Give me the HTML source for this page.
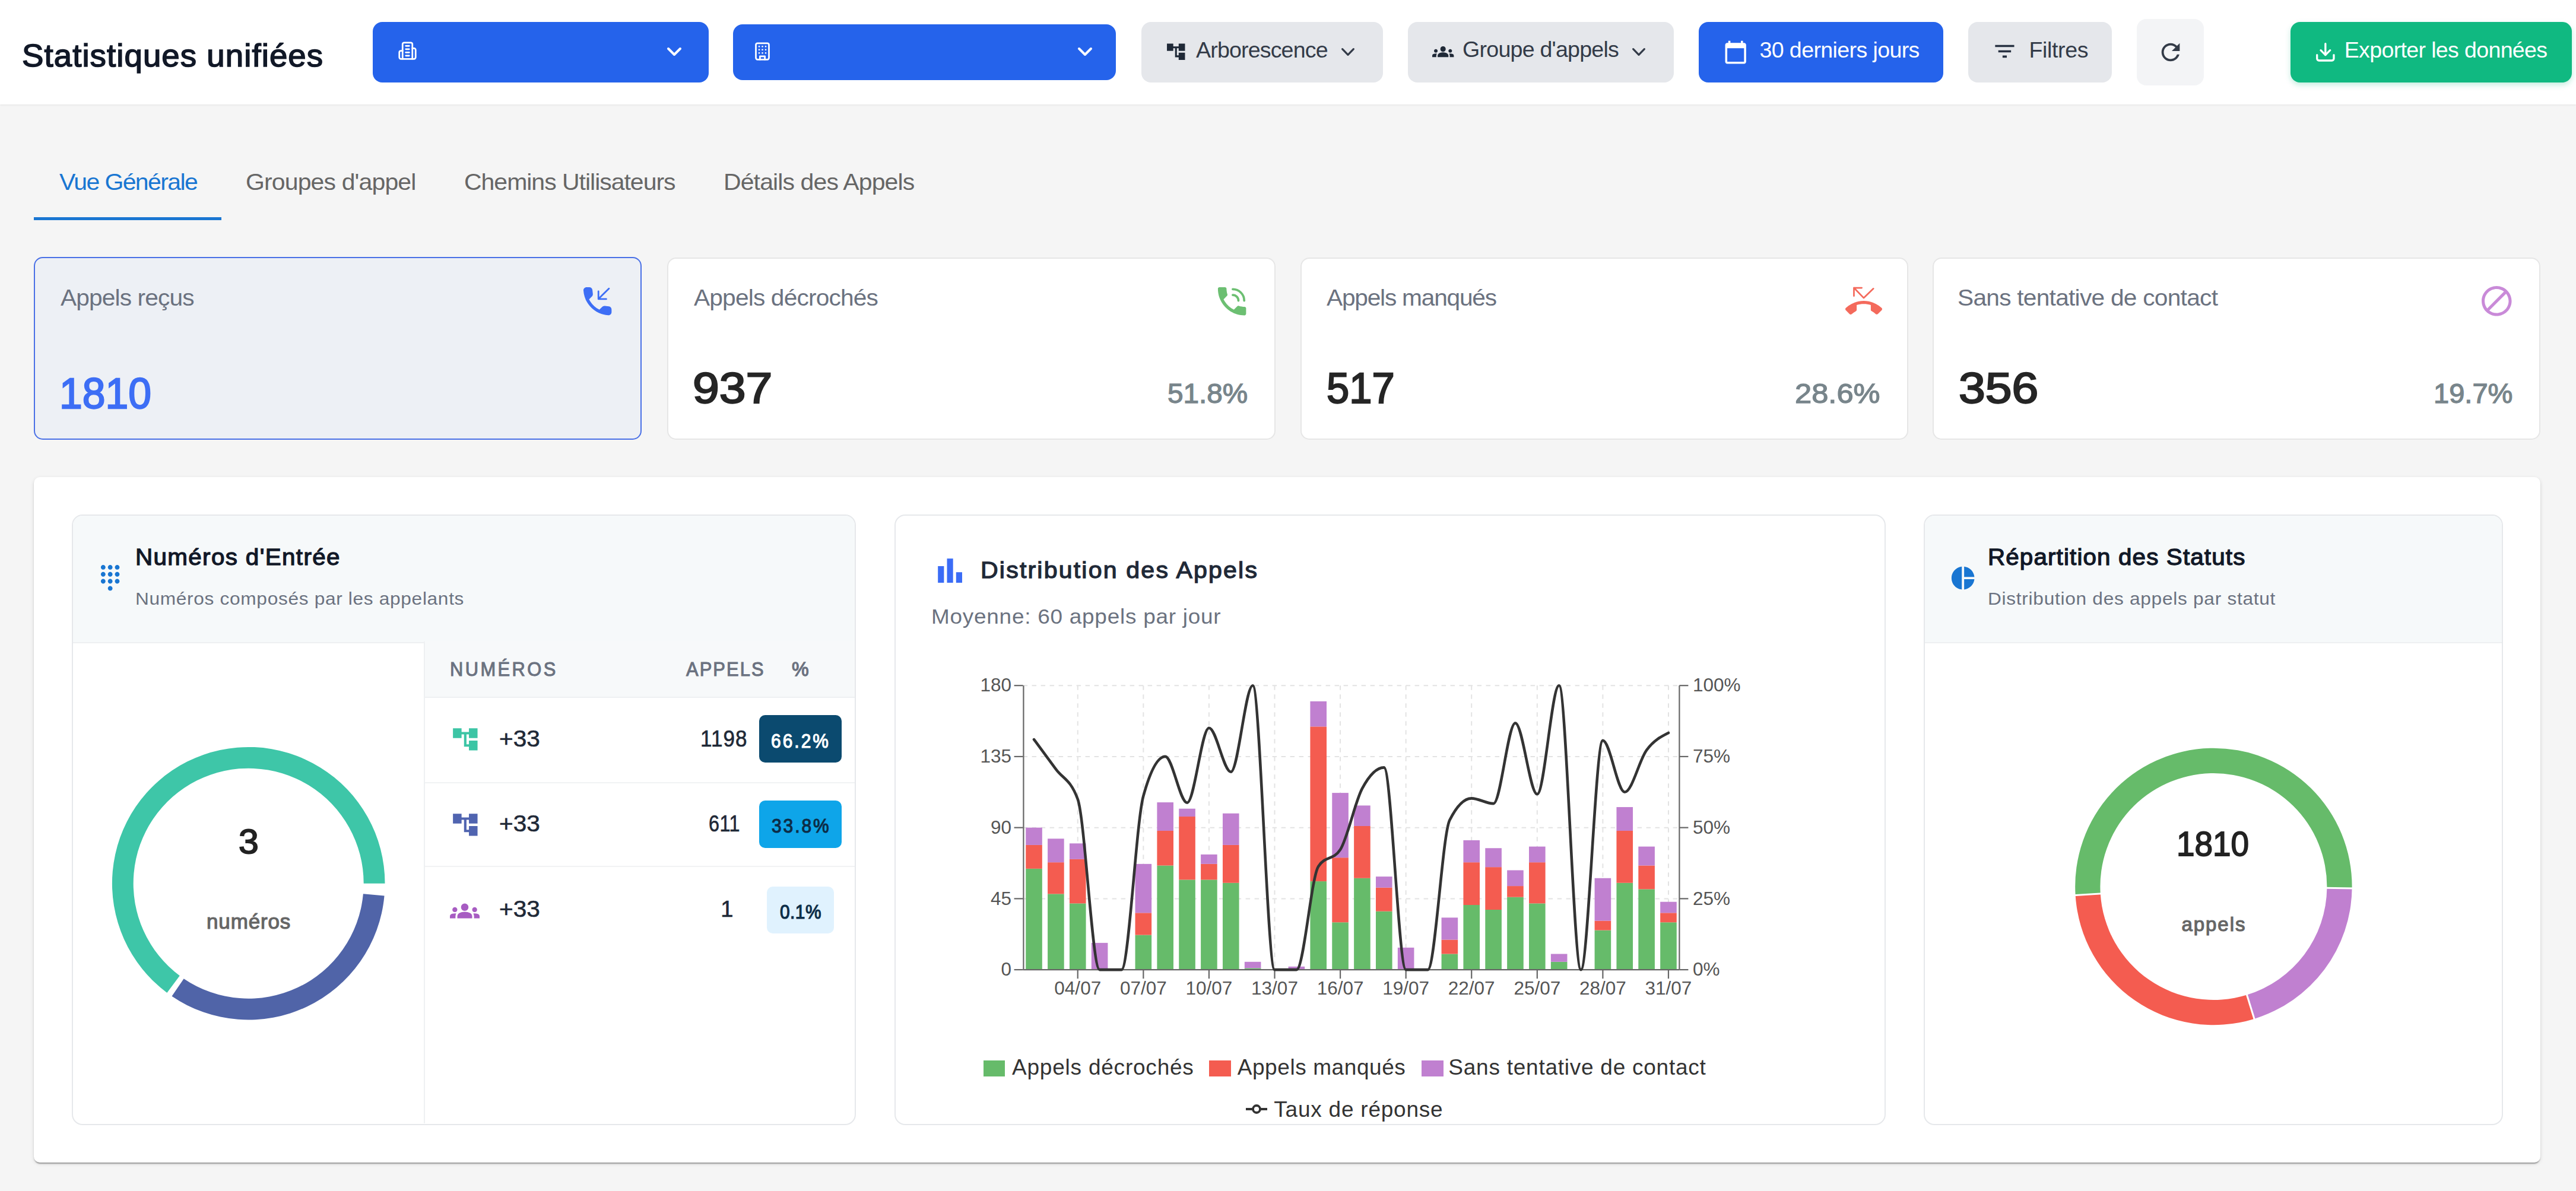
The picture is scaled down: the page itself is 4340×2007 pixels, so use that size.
<!DOCTYPE html>
<html><head><meta charset="utf-8"><title>Statistiques unifiées</title>
<style>
html,body{margin:0;padding:0;}
body{width:4340px;height:2007px;position:relative;overflow:hidden;background:#f5f5f5;font-family:'Liberation Sans',sans-serif;}
</style></head><body>
<div style="position:absolute;left:0px;top:0px;width:4340px;height:176px;background:#ffffff;border-radius:0px;box-shadow:0 1px 3px rgba(0,0,0,0.08);"></div><div style="position:absolute;top:66.95px;font-size:53px;line-height:53px;height:53px;color:#111827;font-weight:400;white-space:nowrap;letter-spacing:1.046px;left:36.97px;transform:scaleX(1.0300);transform-origin:0 0;-webkit-text-stroke:1.6px #111827;">Statistiques unifiées</div><div style="position:absolute;left:628px;top:37px;width:566px;height:102px;background:#2563eb;border-radius:16px;"></div><svg style="position:absolute;left:670px;top:68.8px;" width="33" height="33" viewBox="0 0 24 24"><g fill="none" stroke="#fff" stroke-width="2" stroke-linecap="round" stroke-linejoin="round"><path d="M6 22V4a2 2 0 0 1 2-2h8a2 2 0 0 1 2 2v18Z"/><path d="M6 12H4a2 2 0 0 0-2 2v6a2 2 0 0 0 2 2h2"/><path d="M18 9h2a2 2 0 0 1 2 2v9a2 2 0 0 1-2 2h-2"/><path d="M10 6h4"/><path d="M10 10h4"/><path d="M10 14h4"/><path d="M10 18h4"/></g></svg><svg style="position:absolute;left:1124px;top:80px;overflow:visible;" width="24" height="14" viewBox="0 0 24 14"><polyline points="2.0,2.0 12.0,12.0 22.0,2.0" fill="none" stroke="#fff" stroke-width="4" stroke-linecap="round" stroke-linejoin="round"/></svg><div style="position:absolute;left:1235px;top:41px;width:645px;height:94px;background:#2563eb;border-radius:16px;"></div><svg style="position:absolute;left:1268px;top:70px;" width="33" height="33" viewBox="0 0 24 24"><g fill="none" stroke="#fff" stroke-width="2" stroke-linecap="round" stroke-linejoin="round"><rect x="4" y="2" width="16" height="20" rx="2"/><path d="M9 22v-4h6v4"/><path d="M8 6h.01M16 6h.01M12 6h.01M12 10h.01M12 14h.01M16 10h.01M16 14h.01M8 10h.01M8 14h.01"/></g></svg><svg style="position:absolute;left:1816px;top:80px;overflow:visible;" width="24" height="14" viewBox="0 0 24 14"><polyline points="2.0,2.0 12.0,12.0 22.0,2.0" fill="none" stroke="#fff" stroke-width="4" stroke-linecap="round" stroke-linejoin="round"/></svg><div style="position:absolute;left:1923px;top:37px;width:407px;height:102px;background:#e5e7eb;border-radius:16px;"></div><svg style="position:absolute;left:1963px;top:68.8px;overflow:visible;" width="36.5" height="36.5" viewBox="0 0 24 24"><path d="M22 11V3h-7v3H9V3H2v8h7V8h2v10h4v3h7v-8h-7v3h-2V8h2v3z" fill="#1f2937"/></svg><div style="position:absolute;top:65.84px;font-size:37.6px;line-height:37.6px;height:37.6px;color:#333b48;font-weight:400;white-space:nowrap;left:2015.00px;letter-spacing:-0.845px;">Arborescence</div><svg style="position:absolute;left:2260px;top:81px;overflow:visible;" width="22" height="13" viewBox="0 0 22 13"><polyline points="1.6,1.6 11.0,11.4 20.4,1.6" fill="none" stroke="#333b48" stroke-width="3.2" stroke-linecap="round" stroke-linejoin="round"/></svg><div style="position:absolute;left:2372px;top:37px;width:448px;height:102px;background:#e5e7eb;border-radius:16px;"></div><svg style="position:absolute;left:2412.8px;top:69.2px;overflow:visible;" width="36.4" height="36.4" viewBox="0 0 24 24"><path d="M12 12.75c1.63 0 3.07.39 4.24.9 1.08.48 1.76 1.56 1.76 2.73V18H6v-1.61c0-1.18.68-2.26 1.76-2.73 1.17-.52 2.61-.91 4.24-.91zM4 13c1.1 0 2-.9 2-2s-.9-2-2-2-2 .9-2 2 .9 2 2 2zm1.13 1.1c-.37-.06-.74-.1-1.13-.1-.99 0-1.930.21-2.78.58C.48 14.9 0 15.62 0 16.43V18h4.5v-1.61c0-.83.23-1.61.63-2.29zM20 13c1.1 0 2-.9 2-2s-.9-2-2-2-2 .9-2 2 .9 2 2 2zm4 3.43c0-.81-.48-1.53-1.220-1.85-.85-.37-1.79-.58-2.78-.58-.39 0-.76.04-1.13.1.4.68.63 1.46.63 2.29V18H24v-1.57zM12 6c1.66 0 3 1.34 3 3s-1.34 3-3 3-3-1.34-3-3 1.34-3 3-3z" fill="#1f2937"/></svg><div style="position:absolute;top:65.44px;font-size:37.6px;line-height:37.6px;height:37.6px;color:#333b48;font-weight:400;white-space:nowrap;left:2464.12px;letter-spacing:-0.777px;">Groupe d'appels</div><svg style="position:absolute;left:2750px;top:80.5px;overflow:visible;" width="22" height="13" viewBox="0 0 22 13"><polyline points="1.6,1.6 11.0,11.4 20.4,1.6" fill="none" stroke="#333b48" stroke-width="3.2" stroke-linecap="round" stroke-linejoin="round"/></svg><div style="position:absolute;left:2862px;top:37px;width:412px;height:102px;background:#2563eb;border-radius:16px;"></div><svg style="position:absolute;left:2902.5px;top:66.5px;overflow:visible;" width="42.4" height="42.4" viewBox="0 0 24 24"><path d="M20 3h-1V1h-2v2H7V1H5v2H4c-1.1 0-2 .9-2 2v16c0 1.1.9 2 2 2h16c1.1 0 2-.9 2-2V5c0-1.1-.9-2-2-2zm0 18H4V8h16v13z" fill="#ffffff"/></svg><div style="position:absolute;top:66.24px;font-size:37.6px;line-height:37.6px;height:37.6px;color:#ffffff;font-weight:400;white-space:nowrap;left:2964.50px;letter-spacing:-0.625px;">30 derniers jours</div><div style="position:absolute;left:3316px;top:37px;width:242px;height:102px;background:#e5e7eb;border-radius:16px;"></div><svg style="position:absolute;left:3356.1px;top:65.3px;overflow:visible;" width="42.9" height="42.9" viewBox="0 0 24 24"><path d="M10 18h4v-2h-4v2zM3 6v2h18V6H3zm3 7h12v-2H6v2z" fill="#263040"/></svg><div style="position:absolute;top:66.14px;font-size:37.6px;line-height:37.6px;height:37.6px;color:#333b48;font-weight:400;white-space:nowrap;left:3418.59px;letter-spacing:-0.408px;">Filtres</div><div style="position:absolute;left:3600px;top:32px;width:113px;height:112px;background:#f3f4f6;border-radius:16px;"></div><svg style="position:absolute;left:3633.5px;top:65.2px;overflow:visible;" width="46" height="46" viewBox="0 0 24 24"><path d="M17.65 6.35C16.2 4.9 14.21 4 12 4c-4.42 0-7.99 3.58-7.99 8s3.57 8 7.99 8c3.73 0 6.84-2.55 7.730-6h-2.08c-.82 2.33-3.04 4-5.65 4-3.31 0-6-2.69-6-6s2.69-6 6-6c1.66 0 3.14.69 4.22 1.78L13 11h7V4l-2.35 2.35z" fill="#333b48"/></svg><div style="position:absolute;left:3859px;top:37px;width:474px;height:102px;background:#10b981;border-radius:16px;box-shadow:0 4px 10px rgba(16,185,129,0.25);"></div><svg style="position:absolute;left:3899px;top:68.6px;" width="37.7" height="37.7" viewBox="0 0 24 24"><g fill="none" stroke="#fff" stroke-width="2.1" stroke-linecap="round" stroke-linejoin="round"><path d="M21 15v4a2 2 0 0 1-2 2H5a2 2 0 0 1-2-2v-4"/><polyline points="7 10 12 15 17 10"/><line x1="12" y1="15" x2="12" y2="3"/></g></svg><div style="position:absolute;top:66.14px;font-size:37.6px;line-height:37.6px;height:37.6px;color:#ffffff;font-weight:400;white-space:nowrap;left:3949.69px;letter-spacing:-0.668px;">Exporter les données</div><div style="position:absolute;top:287.75px;font-size:38.3px;line-height:38.3px;height:38.3px;color:#1976d2;font-weight:400;white-space:nowrap;letter-spacing:-1.493px;left:100.20px;transform:scaleX(1.0700);transform-origin:0 0;">Vue Générale</div><div style="position:absolute;top:287.75px;font-size:38.3px;line-height:38.3px;height:38.3px;color:#666666;font-weight:400;white-space:nowrap;letter-spacing:-0.805px;left:413.55px;transform:scaleX(1.0700);transform-origin:0 0;">Groupes d'appel</div><div style="position:absolute;top:287.75px;font-size:38.3px;line-height:38.3px;height:38.3px;color:#666666;font-weight:400;white-space:nowrap;letter-spacing:-0.945px;left:782.15px;transform:scaleX(1.0700);transform-origin:0 0;">Chemins Utilisateurs</div><div style="position:absolute;top:287.75px;font-size:38.3px;line-height:38.3px;height:38.3px;color:#666666;font-weight:400;white-space:nowrap;letter-spacing:-0.822px;left:1219.42px;transform:scaleX(1.0700);transform-origin:0 0;">Détails des Appels</div><div style="position:absolute;left:57px;top:366px;width:316px;height:5px;background:#1976d2;border-radius:0px;"></div><div style="position:absolute;left:57px;top:433px;width:1024px;height:308px;background:#edf0f5;border-radius:15px;box-sizing:border-box;border:2px solid #4a70e6;"></div><div style="position:absolute;top:483.00px;font-size:38px;line-height:38px;height:38px;color:#6b7280;font-weight:400;white-space:nowrap;letter-spacing:-0.806px;left:101.70px;transform:scaleX(1.0700);transform-origin:0 0;">Appels reçus</div><div style="position:absolute;top:625.85px;font-size:73px;line-height:73px;height:73px;color:#3d6ef5;font-weight:400;white-space:nowrap;left:99.57px;transform:scaleX(0.9541);transform-origin:0 0;-webkit-text-stroke:2.3px #3d6ef5;">1810</div><div style="position:absolute;left:1123.5px;top:433.5px;width:1025.5px;height:307.5px;background:#ffffff;border-radius:15px;box-sizing:border-box;border:2px solid #e6e6e6;"></div><div style="position:absolute;top:483.00px;font-size:38px;line-height:38px;height:38px;color:#6b7280;font-weight:400;white-space:nowrap;letter-spacing:-0.768px;left:1168.50px;transform:scaleX(1.0700);transform-origin:0 0;">Appels décrochés</div><div style="position:absolute;top:618.00px;font-size:72px;line-height:72px;height:72px;color:#252525;font-weight:400;white-space:nowrap;left:1167.36px;transform:scaleX(1.1184);transform-origin:0 0;-webkit-text-stroke:2.3px #252525;">937</div><div style="position:absolute;top:640.18px;font-size:46.5px;line-height:46.5px;height:46.5px;color:#78858b;font-weight:400;white-space:nowrap;left:1967.26px;transform:scaleX(1.0251);transform-origin:0 0;-webkit-text-stroke:1.3px #78858b;">51.8%</div><div style="position:absolute;left:2191px;top:433.5px;width:1024px;height:307.5px;background:#ffffff;border-radius:15px;box-sizing:border-box;border:2px solid #e6e6e6;"></div><div style="position:absolute;top:483.00px;font-size:38px;line-height:38px;height:38px;color:#6b7280;font-weight:400;white-space:nowrap;letter-spacing:-1.135px;left:2234.60px;transform:scaleX(1.0700);transform-origin:0 0;">Appels manqués</div><div style="position:absolute;top:618.00px;font-size:72px;line-height:72px;height:72px;color:#252525;font-weight:400;white-space:nowrap;left:2234.55px;transform:scaleX(0.9542);transform-origin:0 0;-webkit-text-stroke:2.3px #252525;">517</div><div style="position:absolute;top:640.18px;font-size:46.5px;line-height:46.5px;height:46.5px;color:#78858b;font-weight:400;white-space:nowrap;left:3024.28px;transform:scaleX(1.0892);transform-origin:0 0;-webkit-text-stroke:1.3px #78858b;">28.6%</div><div style="position:absolute;left:3256px;top:433.5px;width:1024px;height:307.5px;background:#ffffff;border-radius:15px;box-sizing:border-box;border:2px solid #e6e6e6;"></div><div style="position:absolute;top:483.00px;font-size:38px;line-height:38px;height:38px;color:#6b7280;font-weight:400;white-space:nowrap;letter-spacing:-0.688px;left:3297.97px;transform:scaleX(1.0700);transform-origin:0 0;">Sans tentative de contact</div><div style="position:absolute;top:618.00px;font-size:72px;line-height:72px;height:72px;color:#252525;font-weight:400;white-space:nowrap;left:3300.07px;transform:scaleX(1.1184);transform-origin:0 0;-webkit-text-stroke:2.3px #252525;">356</div><div style="position:absolute;top:640.18px;font-size:46.5px;line-height:46.5px;height:46.5px;color:#78858b;font-weight:400;white-space:nowrap;left:4100.03px;transform:scaleX(1.0116);transform-origin:0 0;-webkit-text-stroke:1.3px #78858b;">19.7%</div><svg style="position:absolute;left:975px;top:476px;overflow:visible;" width="63.3" height="63.3" viewBox="0 0 24 24"><path d="M19.23 15.26l-2.54-.29c-.61-.07-1.21.14-1.64.57l-1.84 1.84c-2.83-1.44-5.15-3.75-6.59-6.59l1.85-1.85c.43-.43.64-1.03.57-1.64l-.29-2.52c-.12-1.010-.97-1.77-1.99-1.77H5.03c-1.13 0-2.07.94-2 2.07.53 8.54 7.36 15.36 15.89 15.89 1.13.07 2.07-.87 2.07-2v-1.73c.01-1.01-.75-1.86-1.76-1.98z" fill="#3d6ef5"/><path d="M19.3 3.9L12.9 10.2M12.6 5.6V10.6H17.6" fill="none" stroke="#3d6ef5" stroke-width="1.05" stroke-linecap="round" stroke-linejoin="round"/></svg><svg style="position:absolute;left:2043.6px;top:475.8px;overflow:visible;" width="63.3" height="63.3" viewBox="0 0 24 24"><path d="M20 15.5c-1.25 0-2.45-.2-3.57-.57-.1-.03-.21-.05-.31-.05-.26 0-.51.1-.71.29l-2.2 2.2c-2.83-1.44-5.15-3.75-6.59-6.59l2.2-2.21c.28-.26.36-.65.25-1C8.7 6.45 8.5 5.25 8.5 4c0-.55-.45-1-1-1H4c-.55 0-1 .45-1 1 0 9.39 7.61 17 17 17 .55 0 1-.45 1-1v-3.5c0-.55-.45-1-1-1z" fill="#6cbf72"/><path d="M12.5 4.3A7.3 7.3 0 0 1 19.8 11.6M12.5 8.0A3.6 3.6 0 0 1 16.1 11.6" fill="none" stroke="#6cbf72" stroke-width="1.45" stroke-linecap="round"/></svg><svg style="position:absolute;left:3109.3px;top:476.1px;overflow:visible;" width="62" height="62" viewBox="0 0 24 24"><path d="M23.71 16.67C20.66 13.78 16.54 12 12 12 7.46 12 3.34 13.78.29 16.670c-.18.18-.29.43-.29.71s.11.53.29.71l2.48 2.48c.18.18.43.29.71.29.27 0 .52-.11.7-.28.79-.74 1.69-1.36 2.66-1.850.33-.16.56-.5.56-.9v-3.1c1.45-.48 3-.73 4.6-.73s3.15.25 4.6.72v3.1c0 .39.23.74.56.9.98.49 1.87 1.12 2.67 1.85.18.18.43.28.7.28.28 0 .53-.11.71-.29l2.48-2.48c.18-.18.29-.43.29-.71s-.12-.52-.3-.7z" fill="#f46a5c"/><path d="M10.7 3.5H5.6V8.8M5.6 3.5L12 10.1L18.3 4" fill="none" stroke="#f46a5c" stroke-width="1.05" stroke-linecap="round" stroke-linejoin="round"/></svg><svg style="position:absolute;left:4175.9px;top:476.7px;overflow:visible;" width="60.6" height="60.6" viewBox="0 0 24 24"><path d="M12 2C6.48 2 2 6.48 2 12s4.48 10 10 10 10-4.48 10-10S17.52 2 12 2zM4 12c0-4.42 3.58-8 8-8 1.85 0 3.55.63 4.9 1.69L5.69 16.9C4.63 15.55 4 13.85 4 12zm8 8c-1.85 0-3.55-.63-4.9-1.69L18.31 7.1C19.37 8.45 20 10.15 20 12c0 4.42-3.58 8-8 8z" fill="#c98ad8"/></svg><div style="position:absolute;left:57px;top:804px;width:4223px;height:1155px;background:#ffffff;border-radius:10px;box-shadow:0 4px 2px -2px rgba(0,0,0,0.2),0 2px 2px 0 rgba(0,0,0,0.14),0 2px 6px 0 rgba(0,0,0,0.12);"></div><div style="position:absolute;left:121px;top:867px;width:1321px;height:1029px;box-sizing:border-box;border:2px solid #e6e8eb;border-radius:18px;overflow:hidden;background:#fff;"><div style="position:absolute;left:0;top:0;right:0;height:213px;background:#f6f9fa;border-bottom:2px solid #eef0f2;"></div></div><div style="position:absolute;left:1507px;top:867px;width:1670px;height:1029px;box-sizing:border-box;border:2px solid #e6e8eb;border-radius:18px;background:#fff;"></div><div style="position:absolute;left:3241px;top:867px;width:976px;height:1029px;box-sizing:border-box;border:2px solid #e6e8eb;border-radius:18px;overflow:hidden;background:#fff;"><div style="position:absolute;left:0;top:0;right:0;height:213px;background:#f6f9fa;border-bottom:2px solid #eef0f2;"></div></div><svg style="position:absolute;left:162.3px;top:950.2px;overflow:visible;" width="47.3" height="47.3" viewBox="0 0 24 24"><path d="M12 19c-1.1 0-2 .9-2 2s.9 2 2 2 2-.9 2-2-.9-2-2-2zM6 1c-1.1 0-2 .9-2 2s.9 2 2 2 2-.9 2-2-.9-2-2-2zm0 6c-1.1 0-2 .9-2 2s.9 2 2 2 2-.9 2-2-.9-2-2-2zm0 6c-1.1 0-2 .9-2 2s.9 2 2 2 2-.9 2-2-.9-2-2-2zm12-8c1.1 0 2-.9 2-2s-.9-2-2-2-2 .9-2 2 .9 2 2 2zm-6 8c-1.1 0-2 .9-2 2s.9 2 2 2 2-.9 2-2-.9-2-2-2zm6 0c-1.1 0-2 .9-2 2s.9 2 2 2 2-.9 2-2-.9-2-2-2zm0-6c-1.1 0-2 .9-2 2s.9 2 2 2 2-.9 2-2-.9-2-2-2zm-6 0c-1.1 0-2 .9-2 2s.9 2 2 2 2-.9 2-2-.9-2-2-2zm0-6c-1.1 0-2 .9-2 2s.9 2 2 2 2-.9 2-2-.9-2-2-2z" fill="#1976d2"/></svg><div style="position:absolute;top:919.62px;font-size:38.8px;line-height:38.8px;height:38.8px;color:#111827;font-weight:400;white-space:nowrap;letter-spacing:1.318px;left:227.65px;transform:scaleX(1.0400);transform-origin:0 0;-webkit-text-stroke:1.3px #111827;">Numéros d'Entrée</div><div style="position:absolute;top:993.70px;font-size:29.3px;line-height:29.3px;height:29.3px;color:#6b7280;font-weight:400;white-space:nowrap;letter-spacing:0.626px;left:227.67px;transform:scaleX(1.0800);transform-origin:0 0;">Numéros composés par les appelants</div><div style="position:absolute;left:716px;top:1081px;width:724px;height:94px;background:#f7f9fa;border-radius:0px;"></div><div style="position:absolute;left:714px;top:1081px;width:2px;height:812px;background:#eef0f2;border-radius:0px;"></div><div style="position:absolute;left:716px;top:1174px;width:724px;height:2px;background:#eef0f2;border-radius:0px;"></div><div style="position:absolute;left:716px;top:1318px;width:724px;height:2px;background:#f1f3f4;border-radius:0px;"></div><div style="position:absolute;left:716px;top:1459px;width:724px;height:2px;background:#f1f3f4;border-radius:0px;"></div><div style="position:absolute;top:1110.58px;font-size:33.2px;line-height:33.2px;height:33.2px;color:#6b7280;font-weight:400;white-space:nowrap;letter-spacing:3.685px;left:757.74px;transform:scaleX(0.9300);transform-origin:0 0;-webkit-text-stroke:1.1px #6b7280;">NUMÉROS</div><div style="position:absolute;top:1110.58px;font-size:33.2px;line-height:33.2px;height:33.2px;color:#6b7280;font-weight:400;white-space:nowrap;letter-spacing:2.249px;left:1155.51px;transform:scaleX(0.9300);transform-origin:0 0;-webkit-text-stroke:1.1px #6b7280;">APPELS</div><div style="position:absolute;top:1110.58px;font-size:33.2px;line-height:33.2px;height:33.2px;color:#6b7280;font-weight:400;white-space:nowrap;left:1334.10px;transform:scaleX(0.9711);transform-origin:0 0;-webkit-text-stroke:1.3px #6b7280;">%</div><svg style="position:absolute;left:758.5px;top:1221.0px;overflow:visible;" width="49.7" height="49.7" viewBox="0 0 24 24"><path d="M22 11V3h-7v3H9V3H2v8h7V8h2v10h4v3h7v-8h-7v3h-2V8h2v3z" fill="#3cc5a5"/></svg><div style="position:absolute;top:1225.50px;font-size:38px;line-height:38px;height:38px;color:#1f2937;font-weight:400;white-space:nowrap;left:840.90px;transform:scaleX(1.0651);transform-origin:0 0;-webkit-text-stroke:0.6px #1f2937;">+33</div><div style="position:absolute;top:1225.50px;font-size:38px;line-height:38px;height:38px;color:#1f2937;font-weight:400;white-space:nowrap;letter-spacing:1.200px;left:1180.10px;transform:scaleX(0.9200);transform-origin:0 0;-webkit-text-stroke:0.7px #1f2937;">1198</div><div style="position:absolute;left:1279px;top:1205px;width:139px;height:80px;background:#0b4a6f;border-radius:10px;"></div><div style="position:absolute;top:1232.77px;font-size:32.5px;line-height:32.5px;height:32.5px;color:#ffffff;font-weight:400;white-space:nowrap;letter-spacing:3.307px;left:1299.36px;transform:scaleX(0.9200);transform-origin:0 0;-webkit-text-stroke:1.2px #ffffff;">66.2%</div><svg style="position:absolute;left:758.5px;top:1364.7px;overflow:visible;" width="49.7" height="49.7" viewBox="0 0 24 24"><path d="M22 11V3h-7v3H9V3H2v8h7V8h2v10h4v3h7v-8h-7v3h-2V8h2v3z" fill="#5064b0"/></svg><div style="position:absolute;top:1369.20px;font-size:38px;line-height:38px;height:38px;color:#1f2937;font-weight:400;white-space:nowrap;left:840.90px;transform:scaleX(1.0651);transform-origin:0 0;-webkit-text-stroke:0.6px #1f2937;">+33</div><div style="position:absolute;top:1369.20px;font-size:38px;line-height:38px;height:38px;color:#1f2937;font-weight:400;white-space:nowrap;letter-spacing:0.562px;left:1193.68px;transform:scaleX(0.8500);transform-origin:0 0;-webkit-text-stroke:0.7px #1f2937;">611</div><div style="position:absolute;left:1279px;top:1349px;width:139px;height:80px;background:#0ea5e9;border-radius:10px;"></div><div style="position:absolute;top:1376.47px;font-size:32.5px;line-height:32.5px;height:32.5px;color:#0c2d48;font-weight:400;white-space:nowrap;letter-spacing:3.226px;left:1299.66px;transform:scaleX(0.9200);transform-origin:0 0;-webkit-text-stroke:1.2px #0c2d48;">33.8%</div><svg style="position:absolute;left:758.2px;top:1509.8px;overflow:visible;" width="50" height="50" viewBox="0 0 24 24"><path d="M12 12.75c1.63 0 3.07.39 4.24.9 1.08.48 1.76 1.56 1.76 2.73V18H6v-1.61c0-1.18.68-2.26 1.76-2.73 1.17-.52 2.61-.91 4.24-.91zM4 13c1.1 0 2-.9 2-2s-.9-2-2-2-2 .9-2 2 .9 2 2 2zm1.13 1.1c-.37-.06-.74-.1-1.13-.1-.99 0-1.930.21-2.78.58C.48 14.9 0 15.62 0 16.43V18h4.5v-1.61c0-.83.23-1.61.63-2.29zM20 13c1.1 0 2-.9 2-2s-.9-2-2-2-2 .9-2 2 .9 2 2 2zm4 3.43c0-.81-.48-1.53-1.220-1.85-.85-.37-1.79-.58-2.78-.58-.39 0-.76.04-1.13.1.4.68.63 1.46.63 2.29V18H24v-1.57zM12 6c1.66 0 3 1.34 3 3s-1.34 3-3 3-3-1.34-3-3 1.34-3 3-3z" fill="#a75cc2"/></svg><div style="position:absolute;top:1513.30px;font-size:38px;line-height:38px;height:38px;color:#1f2937;font-weight:400;white-space:nowrap;left:840.90px;transform:scaleX(1.0651);transform-origin:0 0;-webkit-text-stroke:0.6px #1f2937;">+33</div><div style="position:absolute;top:1513.30px;font-size:38px;line-height:38px;height:38px;color:#1f2937;font-weight:400;white-space:nowrap;left:1214.29px;-webkit-text-stroke:0.7px #1f2937;">1</div><div style="position:absolute;left:1292px;top:1494px;width:113px;height:79px;background:#e0f2fe;border-radius:10px;"></div><div style="position:absolute;top:1520.57px;font-size:32.5px;line-height:32.5px;height:32.5px;color:#0c2d48;font-weight:400;white-space:nowrap;letter-spacing:0.495px;left:1313.66px;transform:scaleX(0.9200);transform-origin:0 0;-webkit-text-stroke:1.2px #0c2d48;">0.1%</div><svg style="position:absolute;left:0px;top:0px;overflow:visible;" width="1442" height="1895" viewBox="0 0 1442 1895"><path d="M648.50,1488.70 A229.8,229.8 0 1 0 281.37,1672.95 L302.76,1644.24 A194,194 0 1 1 612.70,1488.70 Z" fill="#3ec6a8"/><path d="M289.53,1678.76 A229.8,229.8 0 0 0 647.55,1509.53 L611.90,1506.28 A194,194 0 0 1 309.66,1649.15 Z" fill="#5064a8"/></svg><div style="position:absolute;top:1390.15px;font-size:57px;line-height:57px;height:57px;color:#222222;font-weight:400;white-space:nowrap;left:401.73px;transform:scaleX(1.0667);transform-origin:0 0;-webkit-text-stroke:1.8px #222222;">3</div><div style="position:absolute;top:1535.35px;font-size:35px;line-height:35px;height:35px;color:#666666;font-weight:400;white-space:nowrap;left:348.03px;letter-spacing:0.858px;-webkit-text-stroke:1.2px #666666;">numéros</div><svg style="position:absolute;left:3284.1px;top:950.8px;overflow:visible;" width="46.3" height="46.3" viewBox="0 0 24 24"><path d="M11 2v20c-5.07-.5-9-4.79-9-10s3.93-9.5 9-10zm2.03 0v8.99H22c-.47-4.74-4.24-8.52-8.97-8.99zm0 11.01V22c4.74-.47 8.5-4.25 8.97-8.99h-8.970z" fill="#1976d2"/></svg><div style="position:absolute;top:919.62px;font-size:38.8px;line-height:38.8px;height:38.8px;color:#111827;font-weight:400;white-space:nowrap;letter-spacing:1.098px;left:3349.05px;transform:scaleX(1.0400);transform-origin:0 0;-webkit-text-stroke:1.3px #111827;">Répartition des Statuts</div><div style="position:absolute;top:994.10px;font-size:29.3px;line-height:29.3px;height:29.3px;color:#6b7280;font-weight:400;white-space:nowrap;letter-spacing:0.661px;left:3349.07px;transform:scaleX(1.0800);transform-origin:0 0;">Distribution des appels par statut</div><svg style="position:absolute;left:0px;top:0px;overflow:visible;" width="4340" height="2007" viewBox="0 0 4340 2007"><path d="M3962.58,1496.85 A233.2,233.2 0 1 0 3496.66,1508.64 L3538.78,1505.99 A191,191 0 1 1 3920.39,1496.33 Z" fill="#66bb6a"/><path d="M3797.97,1716.89 A233.2,233.2 0 0 0 3962.58,1496.85 L3920.39,1496.33 A191,191 0 0 1 3785.56,1676.56 Z" fill="#c080d0"/><path d="M3496.66,1508.64 A233.2,233.2 0 0 0 3797.97,1716.89 L3785.56,1676.56 A191,191 0 0 1 3538.78,1505.99 Z" fill="#f45c50"/><line x1="3541.77" y1="1505.80" x2="3493.67" y2="1508.83" stroke="#fff" stroke-width="3"/><line x1="3917.39" y1="1496.30" x2="3965.58" y2="1496.89" stroke="#fff" stroke-width="3"/><line x1="3784.68" y1="1673.69" x2="3798.85" y2="1719.76" stroke="#fff" stroke-width="3"/></svg><div style="position:absolute;top:1394.15px;font-size:57px;line-height:57px;height:57px;color:#222222;font-weight:400;white-space:nowrap;left:3667.05px;transform:scaleX(0.9628);transform-origin:0 0;-webkit-text-stroke:1.8px #222222;">1810</div><div style="position:absolute;top:1540.95px;font-size:33px;line-height:33px;height:33px;color:#666666;font-weight:400;white-space:nowrap;left:3675.38px;letter-spacing:1.978px;-webkit-text-stroke:1.2px #666666;">appels</div><svg style="position:absolute;left:1569.6px;top:930.5px;overflow:visible;" width="61.2" height="61.2" viewBox="0 0 24 24"><path d="M4 9h4v11H4zm12 4h4v7h-4zm-6-9h4v16h-4z" fill="#3b6cf6"/></svg><div style="position:absolute;top:941.32px;font-size:39.5px;line-height:39.5px;height:39.5px;color:#1f2937;font-weight:400;white-space:nowrap;letter-spacing:2.102px;left:1651.99px;transform:scaleX(1.0400);transform-origin:0 0;-webkit-text-stroke:1.3px #1f2937;">Distribution des Appels</div><div style="position:absolute;top:1021.53px;font-size:34.2px;line-height:34.2px;height:34.2px;color:#6b7280;font-weight:400;white-space:nowrap;letter-spacing:0.699px;left:1569.45px;transform:scaleX(1.0800);transform-origin:0 0;">Moyenne: 60 appels par jour</div><svg style="position:absolute;left:0px;top:0px;" width="4340" height="2007" viewBox="0 0 4340 2007"><line x1="1723.6" y1="1514.38" x2="2829.4" y2="1514.38" stroke="#e3e3e3" stroke-width="2" stroke-dasharray="7.5 7.5"/><line x1="1723.6" y1="1394.65" x2="2829.4" y2="1394.65" stroke="#e3e3e3" stroke-width="2" stroke-dasharray="7.5 7.5"/><line x1="1723.6" y1="1274.92" x2="2829.4" y2="1274.92" stroke="#e3e3e3" stroke-width="2" stroke-dasharray="7.5 7.5"/><line x1="1723.6" y1="1155.20" x2="2829.4" y2="1155.20" stroke="#e3e3e3" stroke-width="2" stroke-dasharray="7.5 7.5"/><line x1="1815.75" y1="1155.2" x2="1815.75" y2="1634.1" stroke="#e3e3e3" stroke-width="2" stroke-dasharray="7.5 7.5"/><line x1="1926.33" y1="1155.2" x2="1926.33" y2="1634.1" stroke="#e3e3e3" stroke-width="2" stroke-dasharray="7.5 7.5"/><line x1="2036.91" y1="1155.2" x2="2036.91" y2="1634.1" stroke="#e3e3e3" stroke-width="2" stroke-dasharray="7.5 7.5"/><line x1="2147.49" y1="1155.2" x2="2147.49" y2="1634.1" stroke="#e3e3e3" stroke-width="2" stroke-dasharray="7.5 7.5"/><line x1="2258.07" y1="1155.2" x2="2258.07" y2="1634.1" stroke="#e3e3e3" stroke-width="2" stroke-dasharray="7.5 7.5"/><line x1="2368.65" y1="1155.2" x2="2368.65" y2="1634.1" stroke="#e3e3e3" stroke-width="2" stroke-dasharray="7.5 7.5"/><line x1="2479.23" y1="1155.2" x2="2479.23" y2="1634.1" stroke="#e3e3e3" stroke-width="2" stroke-dasharray="7.5 7.5"/><line x1="2589.81" y1="1155.2" x2="2589.81" y2="1634.1" stroke="#e3e3e3" stroke-width="2" stroke-dasharray="7.5 7.5"/><line x1="2700.39" y1="1155.2" x2="2700.39" y2="1634.1" stroke="#e3e3e3" stroke-width="2" stroke-dasharray="7.5 7.5"/><line x1="2810.97" y1="1155.2" x2="2810.97" y2="1634.1" stroke="#e3e3e3" stroke-width="2" stroke-dasharray="7.5 7.5"/><line x1="1724.3999999999999" y1="1155.2" x2="1724.3999999999999" y2="1634.1" stroke="#666" stroke-width="2.2"/><line x1="2829.4" y1="1155.2" x2="2829.4" y2="1634.1" stroke="#666" stroke-width="2.2"/><line x1="1723.6" y1="1634.1" x2="2829.4" y2="1634.1" stroke="#666" stroke-width="2.2"/><line x1="1708.6" y1="1634.10" x2="1723.6" y2="1634.10" stroke="#666" stroke-width="2.2"/><line x1="2829.4" y1="1634.10" x2="2844.4" y2="1634.10" stroke="#666" stroke-width="2.2"/><line x1="1708.6" y1="1514.38" x2="1723.6" y2="1514.38" stroke="#666" stroke-width="2.2"/><line x1="2829.4" y1="1514.38" x2="2844.4" y2="1514.38" stroke="#666" stroke-width="2.2"/><line x1="1708.6" y1="1394.65" x2="1723.6" y2="1394.65" stroke="#666" stroke-width="2.2"/><line x1="2829.4" y1="1394.65" x2="2844.4" y2="1394.65" stroke="#666" stroke-width="2.2"/><line x1="1708.6" y1="1274.92" x2="1723.6" y2="1274.92" stroke="#666" stroke-width="2.2"/><line x1="2829.4" y1="1274.92" x2="2844.4" y2="1274.92" stroke="#666" stroke-width="2.2"/><line x1="1708.6" y1="1155.20" x2="1723.6" y2="1155.20" stroke="#666" stroke-width="2.2"/><line x1="2829.4" y1="1155.20" x2="2844.4" y2="1155.20" stroke="#666" stroke-width="2.2"/><line x1="1815.75" y1="1634.1" x2="1815.75" y2="1649.1" stroke="#666" stroke-width="2.2"/><line x1="1926.33" y1="1634.1" x2="1926.33" y2="1649.1" stroke="#666" stroke-width="2.2"/><line x1="2036.91" y1="1634.1" x2="2036.91" y2="1649.1" stroke="#666" stroke-width="2.2"/><line x1="2147.49" y1="1634.1" x2="2147.49" y2="1649.1" stroke="#666" stroke-width="2.2"/><line x1="2258.07" y1="1634.1" x2="2258.07" y2="1649.1" stroke="#666" stroke-width="2.2"/><line x1="2368.65" y1="1634.1" x2="2368.65" y2="1649.1" stroke="#666" stroke-width="2.2"/><line x1="2479.23" y1="1634.1" x2="2479.23" y2="1649.1" stroke="#666" stroke-width="2.2"/><line x1="2589.81" y1="1634.1" x2="2589.81" y2="1649.1" stroke="#666" stroke-width="2.2"/><line x1="2700.39" y1="1634.1" x2="2700.39" y2="1649.1" stroke="#666" stroke-width="2.2"/><line x1="2810.97" y1="1634.1" x2="2810.97" y2="1649.1" stroke="#666" stroke-width="2.2"/><rect x="1728.23" y="1463.82" width="27.6" height="169.18" fill="#66bb6a"/><rect x="1728.23" y="1423.92" width="27.6" height="39.91" fill="#f45c50"/><rect x="1728.23" y="1394.65" width="27.6" height="29.27" fill="#c080d0"/><rect x="1765.09" y="1506.39" width="27.6" height="126.61" fill="#66bb6a"/><rect x="1765.09" y="1453.18" width="27.6" height="53.21" fill="#f45c50"/><rect x="1765.09" y="1413.27" width="27.6" height="39.91" fill="#c080d0"/><rect x="1801.95" y="1522.36" width="27.6" height="110.64" fill="#66bb6a"/><rect x="1801.95" y="1447.86" width="27.6" height="74.50" fill="#f45c50"/><rect x="1801.95" y="1421.26" width="27.6" height="26.61" fill="#c080d0"/><rect x="1838.81" y="1588.87" width="27.6" height="44.13" fill="#c080d0"/><rect x="1912.53" y="1575.57" width="27.6" height="57.43" fill="#66bb6a"/><rect x="1912.53" y="1538.32" width="27.6" height="37.25" fill="#f45c50"/><rect x="1912.53" y="1455.84" width="27.6" height="82.48" fill="#c080d0"/><rect x="1949.39" y="1458.50" width="27.6" height="174.50" fill="#66bb6a"/><rect x="1949.39" y="1399.97" width="27.6" height="58.53" fill="#f45c50"/><rect x="1949.39" y="1352.08" width="27.6" height="47.89" fill="#c080d0"/><rect x="1986.25" y="1482.45" width="27.6" height="150.55" fill="#66bb6a"/><rect x="1986.25" y="1376.03" width="27.6" height="106.42" fill="#f45c50"/><rect x="1986.25" y="1362.72" width="27.6" height="13.30" fill="#c080d0"/><rect x="2023.11" y="1482.45" width="27.6" height="150.55" fill="#66bb6a"/><rect x="2023.11" y="1455.84" width="27.6" height="26.61" fill="#f45c50"/><rect x="2023.11" y="1439.88" width="27.6" height="15.96" fill="#c080d0"/><rect x="2059.97" y="1487.77" width="27.6" height="145.23" fill="#66bb6a"/><rect x="2059.97" y="1423.92" width="27.6" height="63.85" fill="#f45c50"/><rect x="2059.97" y="1370.70" width="27.6" height="53.21" fill="#c080d0"/><rect x="2096.83" y="1631.44" width="27.6" height="1.56" fill="#66bb6a"/><rect x="2096.83" y="1620.80" width="27.6" height="10.64" fill="#c080d0"/><rect x="2170.55" y="1628.78" width="27.6" height="4.22" fill="#c080d0"/><rect x="2207.41" y="1485.11" width="27.6" height="147.89" fill="#66bb6a"/><rect x="2207.41" y="1224.37" width="27.6" height="260.73" fill="#f45c50"/><rect x="2207.41" y="1181.81" width="27.6" height="42.57" fill="#c080d0"/><rect x="2244.27" y="1554.28" width="27.6" height="78.72" fill="#66bb6a"/><rect x="2244.27" y="1445.20" width="27.6" height="109.08" fill="#f45c50"/><rect x="2244.27" y="1336.12" width="27.6" height="109.08" fill="#c080d0"/><rect x="2281.13" y="1479.79" width="27.6" height="153.21" fill="#66bb6a"/><rect x="2281.13" y="1391.99" width="27.6" height="87.80" fill="#f45c50"/><rect x="2281.13" y="1357.40" width="27.6" height="34.59" fill="#c080d0"/><rect x="2317.99" y="1535.66" width="27.6" height="97.34" fill="#66bb6a"/><rect x="2317.99" y="1495.75" width="27.6" height="39.91" fill="#f45c50"/><rect x="2317.99" y="1477.13" width="27.6" height="18.62" fill="#c080d0"/><rect x="2354.85" y="1596.85" width="27.6" height="36.15" fill="#c080d0"/><rect x="2428.57" y="1607.49" width="27.6" height="25.51" fill="#66bb6a"/><rect x="2428.57" y="1583.55" width="27.6" height="23.94" fill="#f45c50"/><rect x="2428.57" y="1546.30" width="27.6" height="37.25" fill="#c080d0"/><rect x="2465.43" y="1525.02" width="27.6" height="107.98" fill="#66bb6a"/><rect x="2465.43" y="1453.18" width="27.6" height="71.84" fill="#f45c50"/><rect x="2465.43" y="1415.93" width="27.6" height="37.25" fill="#c080d0"/><rect x="2502.29" y="1533.00" width="27.6" height="100.00" fill="#66bb6a"/><rect x="2502.29" y="1461.16" width="27.6" height="71.84" fill="#f45c50"/><rect x="2502.29" y="1429.24" width="27.6" height="31.93" fill="#c080d0"/><rect x="2539.15" y="1511.71" width="27.6" height="121.29" fill="#66bb6a"/><rect x="2539.15" y="1493.09" width="27.6" height="18.62" fill="#f45c50"/><rect x="2539.15" y="1466.48" width="27.6" height="26.61" fill="#c080d0"/><rect x="2576.01" y="1522.36" width="27.6" height="110.64" fill="#66bb6a"/><rect x="2576.01" y="1453.18" width="27.6" height="69.17" fill="#f45c50"/><rect x="2576.01" y="1426.58" width="27.6" height="26.61" fill="#c080d0"/><rect x="2612.87" y="1620.80" width="27.6" height="12.20" fill="#66bb6a"/><rect x="2612.87" y="1607.49" width="27.6" height="13.30" fill="#c080d0"/><rect x="2686.59" y="1567.59" width="27.6" height="65.41" fill="#66bb6a"/><rect x="2686.59" y="1551.62" width="27.6" height="15.96" fill="#f45c50"/><rect x="2686.59" y="1479.79" width="27.6" height="71.83" fill="#c080d0"/><rect x="2723.45" y="1487.77" width="27.6" height="145.23" fill="#66bb6a"/><rect x="2723.45" y="1399.97" width="27.6" height="87.80" fill="#f45c50"/><rect x="2723.45" y="1360.06" width="27.6" height="39.91" fill="#c080d0"/><rect x="2760.31" y="1498.41" width="27.6" height="134.59" fill="#66bb6a"/><rect x="2760.31" y="1458.50" width="27.6" height="39.91" fill="#f45c50"/><rect x="2760.31" y="1426.58" width="27.6" height="31.93" fill="#c080d0"/><rect x="2797.17" y="1554.28" width="27.6" height="78.72" fill="#66bb6a"/><rect x="2797.17" y="1538.32" width="27.6" height="15.96" fill="#f45c50"/><rect x="2797.17" y="1519.70" width="27.6" height="18.62" fill="#c080d0"/><path d="M1742.03,1246.13 C1754.32,1262.71 1766.60,1279.28 1778.89,1296.05 C1791.18,1312.82 1803.46,1312.96 1815.75,1346.76 C1828.04,1380.56 1840.32,1634.10 1852.61,1634.10 C1864.90,1634.10 1877.18,1634.10 1889.47,1634.10 C1901.76,1634.10 1914.04,1385.78 1926.33,1341.44 C1938.62,1297.10 1950.90,1274.92 1963.19,1274.92 C1975.48,1274.92 1987.76,1352.68 2000.05,1352.68 C2012.34,1352.68 2024.62,1226.68 2036.91,1226.68 C2049.20,1226.68 2061.48,1300.69 2073.77,1300.69 C2086.06,1300.69 2098.34,1155.20 2110.63,1155.20 C2122.92,1155.20 2135.20,1634.10 2147.49,1634.10 C2159.78,1634.10 2172.06,1634.10 2184.35,1634.10 C2196.64,1634.10 2208.92,1478.76 2221.21,1459.95 C2233.50,1441.15 2245.78,1450.55 2258.07,1431.75 C2270.36,1412.94 2282.64,1351.93 2294.93,1328.87 C2307.22,1305.80 2319.50,1293.34 2331.79,1293.34 C2344.08,1293.34 2356.36,1634.10 2368.65,1634.10 C2380.94,1634.10 2393.22,1634.10 2405.51,1634.10 C2417.80,1634.10 2430.08,1406.51 2442.37,1382.05 C2454.66,1357.58 2466.94,1345.35 2479.23,1345.35 C2491.52,1345.35 2503.80,1354.13 2516.09,1354.13 C2528.38,1354.13 2540.66,1218.45 2552.95,1218.45 C2565.24,1218.45 2577.52,1338.31 2589.81,1338.31 C2602.10,1338.31 2614.38,1155.20 2626.67,1155.20 C2638.96,1155.20 2651.24,1634.10 2663.53,1634.10 C2675.82,1634.10 2688.10,1247.89 2700.39,1247.89 C2712.68,1247.89 2724.96,1334.79 2737.25,1334.79 C2749.54,1334.79 2761.82,1280.67 2774.11,1264.04 C2786.40,1247.41 2798.68,1241.21 2810.97,1235.02" fill="none" stroke="#333333" stroke-width="4.6" stroke-linejoin="round" stroke-linecap="round"/></svg><div style="position:absolute;top:1618.3px;font-size:31.5px;line-height:31.5px;height:31.5px;color:#555555;font-weight:400;white-space:nowrap;font-family:'Liberation Sans',sans-serif;right:2636px;">0</div><div style="position:absolute;top:1498.6px;font-size:31.5px;line-height:31.5px;height:31.5px;color:#555555;font-weight:400;white-space:nowrap;font-family:'Liberation Sans',sans-serif;right:2636px;">45</div><div style="position:absolute;top:1378.9px;font-size:31.5px;line-height:31.5px;height:31.5px;color:#555555;font-weight:400;white-space:nowrap;font-family:'Liberation Sans',sans-serif;right:2636px;">90</div><div style="position:absolute;top:1259.1px;font-size:31.5px;line-height:31.5px;height:31.5px;color:#555555;font-weight:400;white-space:nowrap;font-family:'Liberation Sans',sans-serif;right:2636px;">135</div><div style="position:absolute;top:1139.4px;font-size:31.5px;line-height:31.5px;height:31.5px;color:#555555;font-weight:400;white-space:nowrap;font-family:'Liberation Sans',sans-serif;right:2636px;">180</div><div style="position:absolute;top:1618.3px;font-size:31.5px;line-height:31.5px;height:31.5px;color:#555555;font-weight:400;white-space:nowrap;font-family:'Liberation Sans',sans-serif;left:2852px;">0%</div><div style="position:absolute;top:1498.6px;font-size:31.5px;line-height:31.5px;height:31.5px;color:#555555;font-weight:400;white-space:nowrap;font-family:'Liberation Sans',sans-serif;left:2852px;">25%</div><div style="position:absolute;top:1378.9px;font-size:31.5px;line-height:31.5px;height:31.5px;color:#555555;font-weight:400;white-space:nowrap;font-family:'Liberation Sans',sans-serif;left:2852px;">50%</div><div style="position:absolute;top:1259.1px;font-size:31.5px;line-height:31.5px;height:31.5px;color:#555555;font-weight:400;white-space:nowrap;font-family:'Liberation Sans',sans-serif;left:2852px;">75%</div><div style="position:absolute;top:1139.4px;font-size:31.5px;line-height:31.5px;height:31.5px;color:#555555;font-weight:400;white-space:nowrap;font-family:'Liberation Sans',sans-serif;left:2852px;">100%</div><div style="position:absolute;top:1650.0px;font-size:31.5px;line-height:31.5px;height:31.5px;color:#555555;font-weight:400;white-space:nowrap;font-family:'Liberation Sans',sans-serif;left:1815.75px;transform:translateX(-50%);">04/07</div><div style="position:absolute;top:1650.0px;font-size:31.5px;line-height:31.5px;height:31.5px;color:#555555;font-weight:400;white-space:nowrap;font-family:'Liberation Sans',sans-serif;left:1926.33px;transform:translateX(-50%);">07/07</div><div style="position:absolute;top:1650.0px;font-size:31.5px;line-height:31.5px;height:31.5px;color:#555555;font-weight:400;white-space:nowrap;font-family:'Liberation Sans',sans-serif;left:2036.9099999999999px;transform:translateX(-50%);">10/07</div><div style="position:absolute;top:1650.0px;font-size:31.5px;line-height:31.5px;height:31.5px;color:#555555;font-weight:400;white-space:nowrap;font-family:'Liberation Sans',sans-serif;left:2147.49px;transform:translateX(-50%);">13/07</div><div style="position:absolute;top:1650.0px;font-size:31.5px;line-height:31.5px;height:31.5px;color:#555555;font-weight:400;white-space:nowrap;font-family:'Liberation Sans',sans-serif;left:2258.07px;transform:translateX(-50%);">16/07</div><div style="position:absolute;top:1650.0px;font-size:31.5px;line-height:31.5px;height:31.5px;color:#555555;font-weight:400;white-space:nowrap;font-family:'Liberation Sans',sans-serif;left:2368.65px;transform:translateX(-50%);">19/07</div><div style="position:absolute;top:1650.0px;font-size:31.5px;line-height:31.5px;height:31.5px;color:#555555;font-weight:400;white-space:nowrap;font-family:'Liberation Sans',sans-serif;left:2479.23px;transform:translateX(-50%);">22/07</div><div style="position:absolute;top:1650.0px;font-size:31.5px;line-height:31.5px;height:31.5px;color:#555555;font-weight:400;white-space:nowrap;font-family:'Liberation Sans',sans-serif;left:2589.81px;transform:translateX(-50%);">25/07</div><div style="position:absolute;top:1650.0px;font-size:31.5px;line-height:31.5px;height:31.5px;color:#555555;font-weight:400;white-space:nowrap;font-family:'Liberation Sans',sans-serif;left:2700.3900000000003px;transform:translateX(-50%);">28/07</div><div style="position:absolute;top:1650.0px;font-size:31.5px;line-height:31.5px;height:31.5px;color:#555555;font-weight:400;white-space:nowrap;font-family:'Liberation Sans',sans-serif;left:2810.9700000000003px;transform:translateX(-50%);">31/07</div><div style="position:absolute;left:1656.6px;top:1787.4px;width:36.5px;height:26.899999999999864px;background:#66bb6a;border-radius:0px;"></div><div style="position:absolute;top:1780.45px;font-size:37px;line-height:37px;height:37px;color:#333333;font-weight:400;white-space:nowrap;left:1705.00px;letter-spacing:0.783px;">Appels décrochés</div><div style="position:absolute;left:2037px;top:1787.4px;width:36.5px;height:26.899999999999864px;background:#f45c50;border-radius:0px;"></div><div style="position:absolute;top:1780.45px;font-size:37px;line-height:37px;height:37px;color:#333333;font-weight:400;white-space:nowrap;left:2084.70px;letter-spacing:0.580px;">Appels manqués</div><div style="position:absolute;left:2395px;top:1787.4px;width:36.5px;height:26.899999999999864px;background:#c080d0;border-radius:0px;"></div><div style="position:absolute;top:1780.45px;font-size:37px;line-height:37px;height:37px;color:#333333;font-weight:400;white-space:nowrap;left:2440.34px;letter-spacing:0.751px;">Sans tentative de contact</div><svg style="position:absolute;left:2099px;top:1851px;" width="36" height="36" viewBox="0 0 36 36"><path d="M0,18h11 M25,18h11" stroke="#333" stroke-width="3.8" fill="none"/><circle cx="18" cy="18" r="6" fill="#fff" stroke="#333" stroke-width="3.8"/></svg><div style="position:absolute;top:1851.05px;font-size:37px;line-height:37px;height:37px;color:#333333;font-weight:400;white-space:nowrap;left:2146.36px;letter-spacing:0.764px;">Taux de réponse</div>
</body></html>
